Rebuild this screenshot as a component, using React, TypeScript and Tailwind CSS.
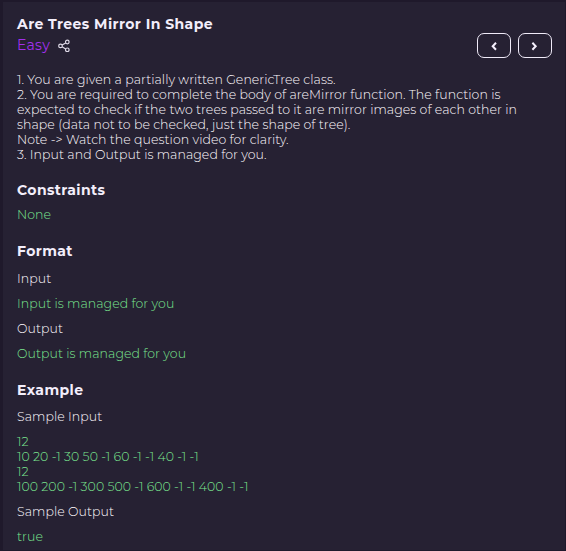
import type { ReactNode } from "react";

function Heading({ className = "", children }: { className?: string; children: ReactNode }) {
  return (
    <h2 className={`h-5 text-[14px] leading-5 font-bold tracking-[0.42px] text-[#f3eefb] whitespace-pre ${className}`}>
      {children}
    </h2>
  );
}

function Line({ className = "", children }: { className?: string; children: ReactNode }) {
  return <div className={`h-[15px] whitespace-pre ${className}`}>{children}</div>;
}

function NavButton({ d, label }: { d: string; label: string }) {
  return (
    <button
      aria-label={label}
      className="flex h-[25px] w-[34px] items-center justify-center rounded-[7px] border border-[#efeaf8]"
    >
      <svg width="10" height="10" viewBox="0 0 10 10" fill="none" stroke="#f5f0fd" strokeWidth="2">
        <path d={d} />
      </svg>
    </button>
  );
}

export default function App() {
  return (
    <div className="h-[551px] w-[566px] overflow-hidden bg-[#1f192b] pt-[2px] pr-px pb-px pl-[3px] font-['Montserrat','Inter',sans-serif]">
      <main className="h-full bg-[#262133] pt-3 pl-[14px] text-[12.5px] leading-[15px] font-light tracking-[0.06px] text-[#fffaff]">
        <header className="flex h-[58px] justify-between pr-[13px]">
          <div>
            <Heading>Are Trees Mirror In Shape</Heading>
            <div className="mt-px flex h-5 items-center gap-2">
              <span className="w-[33px] text-[14px] leading-5 font-normal tracking-[0.3px] text-[#a030ec]">Easy</span>
              <svg width="13" height="14" viewBox="0 0 13 14" fill="none" stroke="#dfdae8" strokeWidth="1.2">
                <circle cx="2.5" cy="7.9" r="1.8" />
                <circle cx="9.3" cy="4" r="1.8" />
                <circle cx="9.3" cy="11.8" r="1.8" />
                <path d="M4.1 7 7.7 4.9M4.1 8.8l3.6 2.1" />
              </svg>
            </div>
          </div>
          <nav className="mt-[19px] flex gap-[7px]">
            <NavButton label="Previous question" d="M7 1.7 3.7 5.2 7 8.7" />
            <NavButton label="Next question" d="M2.4 1.7 5.7 5.2 2.4 8.7" />
          </nav>
        </header>

        <section>
          <Line>1. You are given a partially written GenericTree class.</Line>
          <Line>2. You are required to complete the body of areMirror function. The function is</Line>
          <Line>expected to check if the two trees passed to it are mirror images of each other in</Line>
          <Line>shape (data not to be checked, just the shape of tree).</Line>
          <Line>Note -&gt; Watch the question video for clarity.</Line>
          <Line>3. Input and Output is managed for you.</Line>
        </section>

        <section className="mt-[18px]">
          <Heading>Constraints</Heading>
          <Line className="mt-[7px] text-[#7ae58f]">None</Line>
        </section>

        <section className="mt-[19px]">
          <Heading>Format</Heading>
          <div className="mt-[10px] flex flex-col gap-[10px]">
            <Line>Input</Line>
            <Line className="text-[#7ae58f]">Input is managed for you</Line>
            <Line>Output</Line>
            <Line className="text-[#7ae58f]">Output is managed for you</Line>
          </div>
        </section>

        <section className="mt-[19px]">
          <Heading>Example</Heading>
          <div className="mt-[9px] flex flex-col gap-[10px]">
            <Line>Sample Input</Line>
            <div className="text-[#7ae58f]">
              <Line>12</Line>
              <Line>10 20 -1 30 50 -1 60 -1 -1 40 -1 -1</Line>
              <Line>12</Line>
              <Line>100 200 -1 300 500 -1 600 -1 -1 400 -1 -1</Line>
            </div>
            <Line>Sample Output</Line>
            <Line className="text-[#7ae58f]">true</Line>
          </div>
        </section>
      </main>
    </div>
  );
}
